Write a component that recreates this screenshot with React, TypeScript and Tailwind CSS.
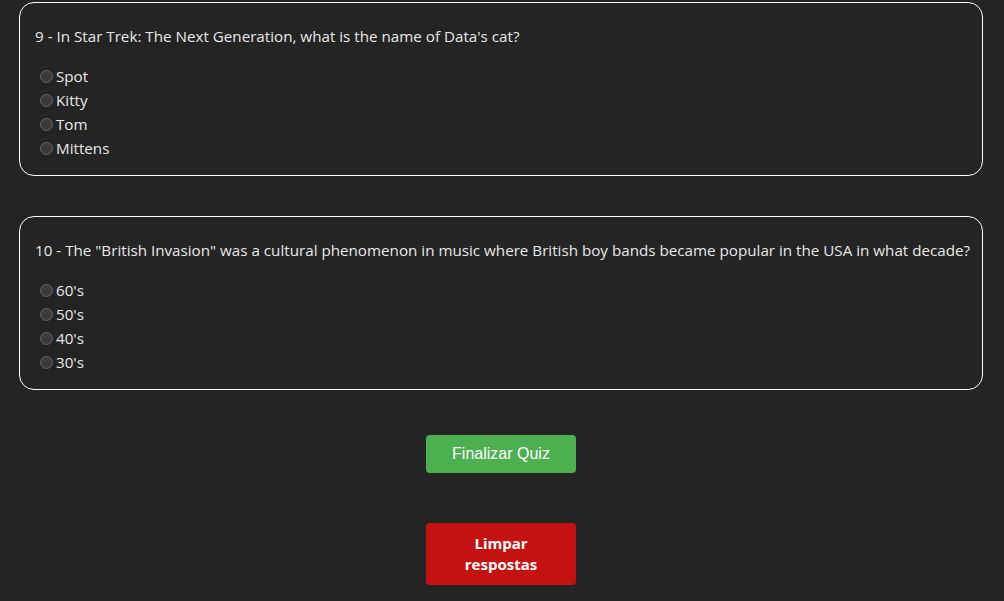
import React, { useState } from "react";

type Question = {
  id: number;
  text: string;
  options: string[];
};

const questions: Question[] = [
  {
    id: 9,
    text: "In Star Trek: The Next Generation, what is the name of Data's cat?",
    options: ["Spot", "Kitty", "Tom", "Mittens"],
  },
  {
    id: 10,
    text: 'The "British Invasion" was a cultural phenomenon in music where British boy bands became popular in the USA in what decade?',
    options: ["60's", "50's", "40's", "30's"],
  },
];

const QuestionCard = ({
  question,
  selected,
  onSelect,
}: {
  question: Question;
  selected?: string;
  onSelect: (value: string) => void;
}) => {
  return (
    <div className="border border-white rounded-[15px] pl-[15px] pr-[15px] pt-[21px] pb-[15px]">
      <p className="h-[24px] leading-[24px] text-[15.2px] text-[#e8e8e8] whitespace-nowrap">
        {question.id} - {question.text}
      </p>
      <div className="mt-[16px] flex flex-col">
        {question.options.map((option) => (
          <label
            key={option}
            className="h-[24px] flex items-center cursor-pointer text-[15.2px] text-[#e8e8e8]"
            onClick={() => onSelect(option)}
          >
            <span className="ml-[5px] mr-[3px] w-[13px] h-[13px] rounded-full border border-[#666666] bg-[#3b3b3b] flex items-center justify-center">
              {selected === option && (
                <span className="w-[7px] h-[7px] rounded-full bg-[#9ec2ff]" />
              )}
            </span>
            {option}
          </label>
        ))}
      </div>
    </div>
  );
};

const App = () => {
  const [answers, setAnswers] = useState<Record<number, string>>({});

  return (
    <main
      className="w-full min-h-[601px] bg-[#242424] pl-[19px] pr-[21px] pt-[2px] pb-[16px]"
      style={{ fontFamily: '"Open Sans", "Noto Sans", sans-serif' }}
    >
      <div className="flex flex-col gap-[40px]">
        {questions.map((q) => (
          <QuestionCard
            key={q.id}
            question={q}
            selected={answers[q.id]}
            onSelect={(v) => setAnswers((prev) => ({ ...prev, [q.id]: v }))}
          />
        ))}
      </div>

      <div className="flex flex-col items-center mt-[45px] gap-[50px]">
        <button
          className="w-[150px] h-[38px] rounded-[4px] bg-[#4caf50] text-white text-[16px]"
          style={{ fontFamily: '"Liberation Sans", Arial, sans-serif' }}
        >
          Finalizar Quiz
        </button>
        <button
          className="w-[150px] h-[62px] rounded-[4px] bg-[#c41212] text-white text-[15px] font-bold leading-[21px] px-[30px]"
          onClick={() => setAnswers({})}
        >
          Limpar respostas
        </button>
      </div>
    </main>
  );
};

export default App;
